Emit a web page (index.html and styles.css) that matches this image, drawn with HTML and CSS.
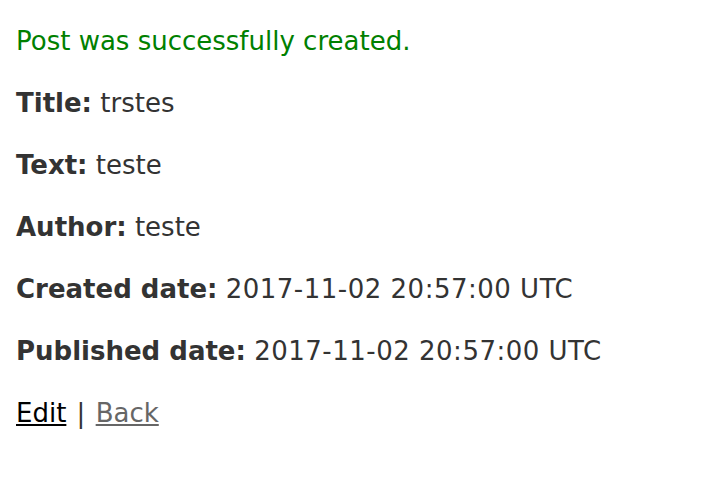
FILE: index.html
```html
<!DOCTYPE html>
<html>
<head>
<meta charset="utf-8">
<title>Post</title>
<link rel="stylesheet" href="styles.css">
</head>
<body>
<main class="page">
<p class="notice">Post was successfully created.</p>
<p><strong>Title:</strong> trstes</p>
<p><strong>Text:</strong> teste</p>
<p><strong>Author:</strong> teste</p>
<p><strong>Created date:</strong> <span class="date">2017-11-02 20:57:00 UTC</span></p>
<p><strong>Published date:</strong> <span class="date">2017-11-02 20:57:00 UTC</span></p>
<p class="actions"><a class="link" href="#edit">Edit</a> | <a class="link visited" href="#back">Back</a></p>
</main>
</body>
</html>
```
FILE: styles.css
```css
html, body {
  margin: 0;
  padding: 0;
  background: #fff;
}
body {
  font-family: "DejaVu Sans", Verdana, sans-serif;
  font-size: 26px;
  line-height: 36px;
  color: #333;
}
.page {
  padding: 23px 16px 0;
}
.page p {
  margin: 0 0 26px;
}
.notice {
  color: #008000;
}
.date {
  letter-spacing: 0.5px;
}
.actions {
  word-spacing: 2px;
}
.link {
  color: #000;
  text-decoration: underline;
}
.link.visited {
  color: #666;
}
```
